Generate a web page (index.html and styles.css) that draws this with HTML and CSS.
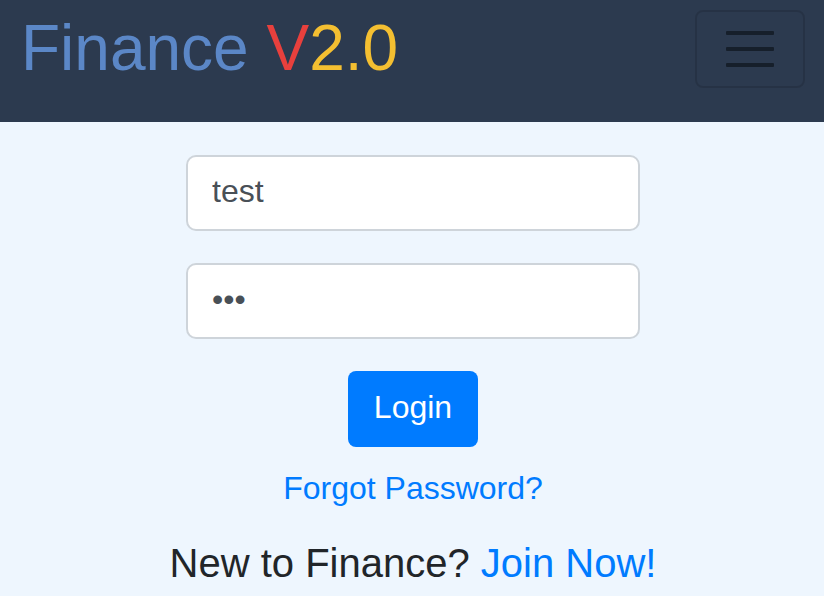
FILE: index.html
```html
<!DOCTYPE html>
<html lang="en">
<head>
<meta charset="utf-8">
<title>Finance V2.0 - Login</title>
<link rel="stylesheet" href="styles.css">
</head>
<body>
<nav class="navbar">
  <a class="brand" href="#"><span class="brand-name">Finance</span> <span class="brand-v">V</span><span class="brand-num">2.0</span></a>
  <button class="toggler" type="button" aria-label="Toggle navigation">
    <span class="bar"></span>
    <span class="bar"></span>
    <span class="bar"></span>
  </button>
</nav>
<main class="content">
  <form class="login-form">
    <input class="field" type="text" value="test">
    <input class="field" type="password" value="abc">
    <button class="btn-login" type="button">Login</button>
  </form>
  <a class="forgot" href="#">Forgot Password?</a>
  <p class="signup">New to Finance? <a class="join" href="#">Join Now!</a></p>
</main>
</body>
</html>
```

FILE: styles.css
```css
* { box-sizing: border-box; }

html, body {
  margin: 0;
  padding: 0;
  height: 100%;
}

body {
  background: #eef6fe;
  font-family: "Liberation Sans", Arial, sans-serif;
  color: #212529;
  overflow: hidden;
}

.navbar {
  height: 122px;
  background: #2c3a4f;
  display: flex;
  justify-content: space-between;
  align-items: flex-start;
  padding: 0 19px 0 21px;
}

.brand {
  text-decoration: none;
  font-size: 64px;
  line-height: 64px;
  margin-top: 16px;
  white-space: nowrap;
}

.brand-name { color: #5b87c7; }
.brand-v { color: #e8403d; }
.brand-num { color: #f4bf31; }

.toggler {
  margin-top: 10px;
  width: 110px;
  height: 78px;
  background: transparent;
  border: 2px solid rgba(0, 0, 0, 0.12);
  border-radius: 8px;
  display: flex;
  flex-direction: column;
  align-items: center;
  justify-content: center;
  gap: 12px;
  padding: 0;
}

.bar {
  display: block;
  width: 48px;
  height: 4px;
  border-radius: 1px;
  background: #161f2b;
}

.content {
  display: flex;
  flex-direction: column;
  align-items: center;
  padding: 33px 0 0 2px;
}

.login-form {
  display: flex;
  flex-direction: column;
  align-items: center;
  gap: 32px;
}

.field {
  width: 454px;
  height: 76px;
  border: 2px solid #ced4da;
  border-radius: 10px;
  background: #fff;
  padding: 0 24px 4px;
  font-family: "Liberation Sans", Arial, sans-serif;
  font-size: 32px;
  color: #495057;
  outline: none;
}

.btn-login {
  width: 130px;
  height: 76px;
  border: none;
  border-radius: 8px;
  background: #007bff;
  color: #fff;
  font-family: "Liberation Sans", Arial, sans-serif;
  font-size: 32px;
  padding: 0 0 4px;
}

.forgot {
  margin-top: 17px;
  font-size: 32px;
  line-height: 48px;
  color: #007bff;
  text-decoration: none;
}

.signup {
  margin: 27px 0 0;
  font-size: 40px;
  line-height: 48px;
  color: #212529;
}

.join {
  color: #007bff;
  text-decoration: none;
}
```
